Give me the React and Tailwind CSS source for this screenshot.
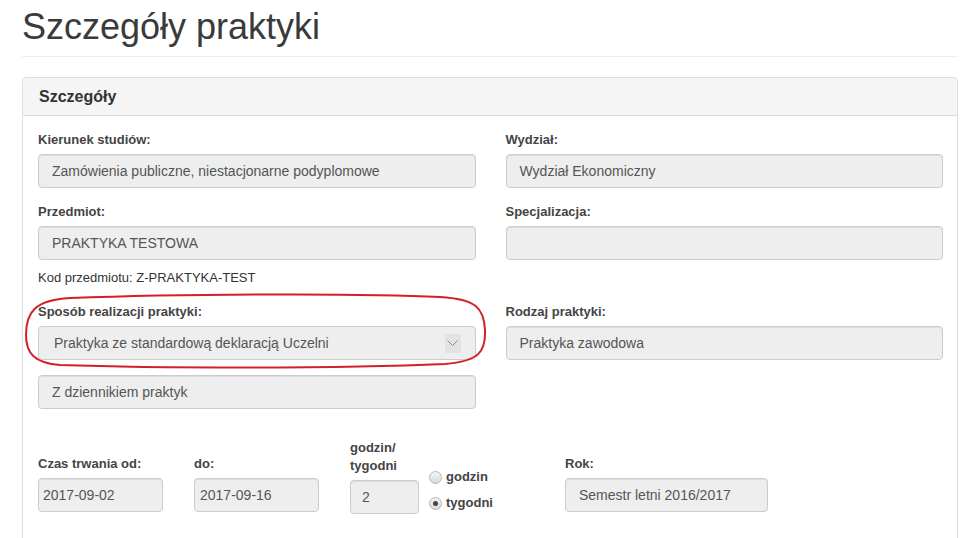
const font = { fontFamily: '"Liberation Sans", Arial, sans-serif' }

function Label({ children, className = '' }) {
    return (
        <div className={`text-[13px] leading-[18px] font-bold text-[#444] mb-[5px] ${className}`}>
            {children}
        </div>
    )
}

function Field({ value, className = '', pad = 'px-[13px]' }) {
    return (
        <div
            className={`h-[34px] flex items-center ${pad} bg-[#eeeeee] border border-[#cccccc] rounded-[4px] shadow-[inset_0_1px_1px_rgba(0,0,0,0.075)] text-[14px] text-[#555] whitespace-nowrap ${className}`}
        >
            {value}
        </div>
    )
}

function Radio({ label, checked }) {
    return (
        <div className="h-[26px] flex items-center">
            <span className="w-[13px] h-[13px] rounded-full border border-[#b5b5b5] bg-gradient-to-b from-[#f4f4f4] to-[#d9d9d9] flex items-center justify-center">
                {checked && <span className="w-[5px] h-[5px] rounded-full bg-[#444]" />}
            </span>
            <span className="ml-[4px] text-[13px] font-bold text-[#444]">{label}</span>
        </div>
    )
}

export default function App() {
    return (
        <div className="relative w-[968px] h-[538px] overflow-hidden bg-white" style={font}>
            <div className="pl-[22px] pr-[10px]">
                {/* Page header */}
                <div className="pt-[7px] pb-[9px] border-b border-[#eeeeee]">
                    <h1 className="text-[36px] leading-[39.6px] text-[#3a3a3a]">Szczegóły praktyki</h1>
                </div>

                {/* Panel */}
                <div className="mt-[20px] border border-[#dddddd] rounded-[4px] shadow-[0_1px_1px_rgba(0,0,0,0.05)] h-[600px]">
                    <div className="bg-[#f5f5f5] border-b border-[#dddddd] px-[16px] py-[10px] rounded-t-[4px]">
                        <h3 className="text-[16px] leading-[17.6px] font-bold text-[#333]">Szczegóły</h3>
                    </div>

                    <div className="pl-[15px] pr-[14px] pt-[15px]">
                        <div className="grid grid-cols-2 gap-x-[30px]">
                            <div className="mb-[15px]">
                                <Label>Kierunek studiów:</Label>
                                <Field value="Zamówienia publiczne, niestacjonarne podyplomowe" />
                            </div>
                            <div className="mb-[15px]">
                                <Label>Wydział:</Label>
                                <Field value="Wydział Ekonomiczny" />
                            </div>

                            <div className="mb-[16px]">
                                <Label>Przedmiot:</Label>
                                <Field value="PRAKTYKA TESTOWA" />
                                <div className="mt-[9px] text-[13px] leading-[18px] text-[#333]">
                                    Kod przedmiotu: Z-PRAKTYKA-TEST
                                </div>
                            </div>
                            <div className="mb-[16px]">
                                <Label>Specjalizacja:</Label>
                                <Field value="" />
                            </div>

                            <div>
                                <Label>Sposób realizacji praktyki:</Label>
                                <div className="h-[34px] flex items-center justify-between pl-[15px] pr-[14px] bg-[#eeeeee] border border-[#cccccc] rounded-[4px] text-[14px] text-[#555]">
                                    <span>Praktyka ze standardową deklaracją Uczelni</span>
                                    <span className="w-[16px] h-[19px] bg-[#e3e3e3] flex items-center justify-center">
                                        <svg width="11" height="6" viewBox="0 0 11 6" fill="none">
                                            <path d="M0.5 0.5 L5.5 5.5 L10.5 0.5" stroke="#8a8a8a" strokeWidth="1" />
                                        </svg>
                                    </span>
                                </div>
                                <Field value="Z dziennikiem praktyk" className="mt-[15px]" />
                            </div>
                            <div>
                                <Label>Rodzaj praktyki:</Label>
                                <Field value="Praktyka zawodowa" />
                            </div>
                        </div>

                        {/* Duration row */}
                        <div className="mt-[30px] flex items-end">
                            <div className="w-[156px] mb-[2px]">
                                <Label>Czas trwania od:</Label>
                                <Field value="2017-09-02" pad="px-[4px]" className="w-[125px]" />
                            </div>
                            <div className="w-[156px] mb-[2px]">
                                <Label>do:</Label>
                                <Field value="2017-09-16" pad="px-[5px]" className="w-[125px]" />
                            </div>
                            <div className="w-[79px]">
                                <Label>godzin/<br />tygodni</Label>
                                <Field value="2" pad="pl-[11px]" className="w-[69px]" />
                            </div>
                            <div className="w-[136px] mb-[-2px]">
                                <Radio label="godzin" />
                                <Radio label="tygodni" checked />
                            </div>
                            <div className="mb-[2px]">
                                <Label>Rok:</Label>
                                <Field value="Semestr letni 2016/2017" className="w-[203px]" />
                            </div>
                        </div>
                    </div>
                </div>
            </div>

            {/* Red annotation around the select */}
            <svg className="absolute left-0 top-0 pointer-events-none" width="968" height="538" viewBox="0 0 968 538" fill="none">
                <path
                    d="M70 298 C 180 294, 360 293, 440 297 C 476 299, 484 308, 485 330 C 486 352, 479 361, 445 364 C 330 369, 150 368, 60 365 C 34 363, 26 353, 26 335 C 26 313, 34 300, 70 298 Z"
                    stroke="#d21f2b"
                    strokeWidth="2"
                />
            </svg>
        </div>
    )
}
